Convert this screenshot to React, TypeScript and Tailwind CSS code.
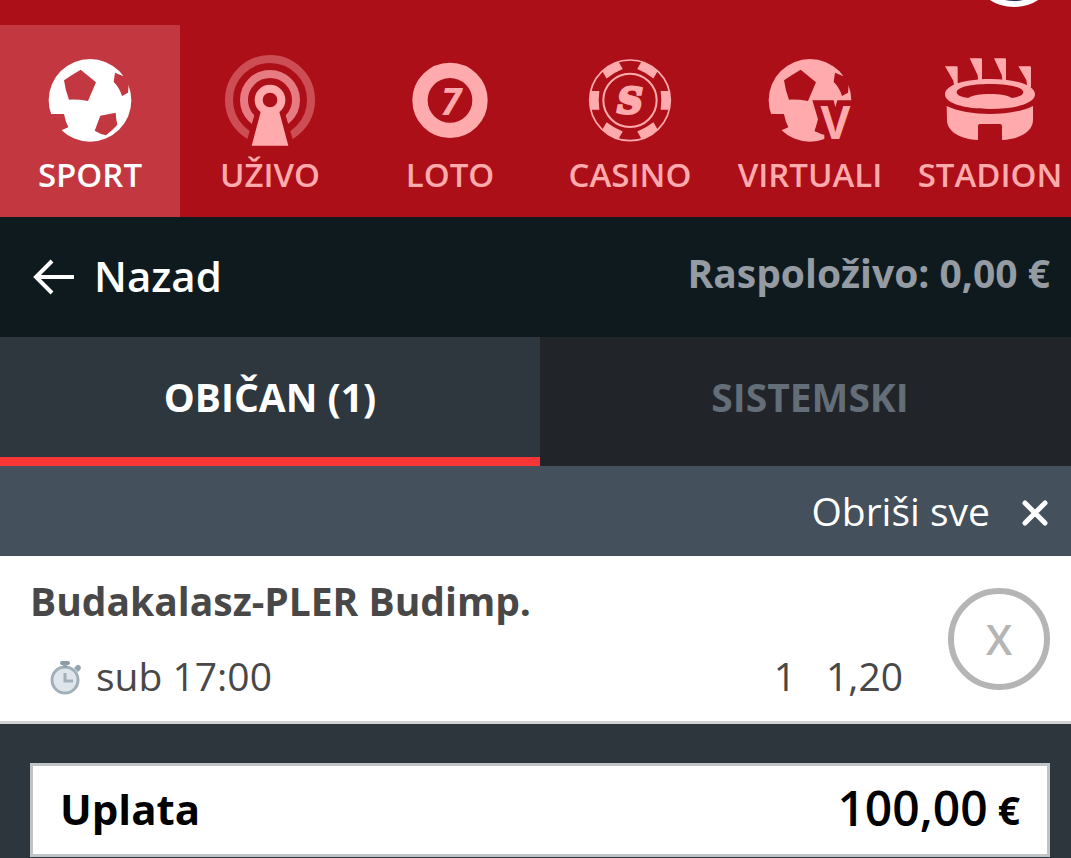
import { useState } from 'react'
import type { ReactNode } from 'react'

function IconFrame({ children }: { children: ReactNode }) {
  return (
    <svg viewBox="0 0 288 288" fill="currentColor" className="w-24 h-24 overflow-visible" aria-hidden="true">
      {children}
    </svg>
  )
}

const ballPatches = (
  <g fill="black">
    <path d="M116 53L162 91L138 147Q110 142 81 143Q70 116 66 85Q90 68 116 53Z" />
    <path d="M219 62L243 72L280 60L260 98L258 122L240 132Q232 106 215 90Z" />
    <path d="M0 186H66Q70 208 79 226L60 234L30 260Z" />
    <path d="M175 191L221 182Q222 200 226 218Q210 236 192 250Q174 246 158 236Z" />
  </g>
)

function SportIcon() {
  return (
    <IconFrame>
      <mask id="ball-mask">
        <rect width="288" height="288" fill="white" />
        {ballPatches}
      </mask>
      <circle cx="144" cy="145" r="124" mask="url(#ball-mask)" />
    </IconFrame>
  )
}

function LiveIcon() {
  return (
    <IconFrame>
      <mask id="live-mask">
        <rect width="288" height="288" fill="white" />
        <path d="M106 160L68 288H220L182 160Z" fill="black" />
      </mask>
      <g fill="none" stroke="currentColor" strokeWidth="24">
        <circle cx="144" cy="144" r="123" opacity="0.4" mask="url(#live-mask)" />
        <circle cx="144" cy="144" r="78" opacity="0.7" mask="url(#live-mask)" />
        <circle cx="144" cy="144" r="34" />
      </g>
      <path d="M117 176L89 281H199L171 176Q144 190 117 176Z" />
    </IconFrame>
  )
}

function LotoIcon() {
  return (
    <IconFrame>
      <circle cx="144" cy="145" r="90" fill="none" stroke="currentColor" strokeWidth="46" />
      <text x="147" y="188" textAnchor="middle" className="font-['Open_Sans',sans-serif] text-[112px] font-bold italic">7</text>
    </IconFrame>
  )
}

function CasinoIcon() {
  return (
    <IconFrame>
      <g fill="none" stroke="currentColor">
        <circle cx="144" cy="145" r="121" strokeWidth="5" />
        <circle cx="144" cy="145" r="80" strokeWidth="6" />
      </g>
      {[0, 60, 120, 180, 240, 300].map((angle) => (
        <path key={angle} d="M236 117H262Q268 145 262 173H236Q240 145 236 117Z" transform={`rotate(${angle} 144 145)`} />
      ))}
      <text
        x="144"
        y="184"
        textAnchor="middle"
        stroke="currentColor"
        strokeWidth="9"
        className="font-['DejaVu_Serif',serif] text-[106px] font-bold italic"
      >
        S
      </text>
    </IconFrame>
  )
}

function VirtualIcon() {
  return (
    <IconFrame>
      <mask id="virtual-mask">
        <rect width="288" height="288" fill="white" />
        {ballPatches}
        <path d="M151 145H215L220 166L226 145H288V288H187V247L158 238L168 202Z" fill="black" />
      </mask>
      <circle cx="144" cy="145" r="124" mask="url(#virtual-mask)" />
      <text x="220" y="261" textAnchor="middle" className="font-['Open_Sans',sans-serif] text-[138px] font-bold">V</text>
    </IconFrame>
  )
}

function StadiumIcon() {
  return (
    <IconFrame>
      <path d="M9 43H44Q47 43 47 47V105H37L34 86Z" />
      <path d="M83 19H117Q120 19 120 23V90H109L107 70Z" />
      <path d="M156 19H189Q192 19 192 23V90H182L179 68Z" />
      <path d="M229 43H264Q267 43 267 47V105H256L253 84Z" />
      <path
        fillRule="evenodd"
        d="M144 81C222 81 279 100 279 127S222 171 144 171S9 154 9 127S66 81 144 81ZM144 96C85 96 44 106 44 121C44 130 59 136 79 138C90 130 115 126 144 126S198 130 209 138C229 136 244 130 244 121C244 106 203 96 144 96Z"
      />
      <path d="M14 162C78 194 210 194 273 162V204C273 240 230 262 180 264V222Q180 216 174 216H114Q108 216 108 222V264C58 262 15 240 15 204Z" />
    </IconFrame>
  )
}

function StopwatchIcon() {
  return (
    <svg viewBox="0 0 32 36" className="mt-[3px] w-8 h-9" aria-hidden="true">
      <circle cx="15" cy="20" r="13" fill="#dfe6eb" stroke="#a1afb9" strokeWidth="3" />
      <rect x="10" y="1" width="10" height="4" rx="2" fill="#8b9ca6" />
      <path d="M13 4h4v4h-4zM24 8l3-3a3 3 0 0 1 3 5l-2 2z" fill="#94a4ae" />
      <path d="M15 13v8h8" fill="none" stroke="#a1afb9" strokeWidth="3" />
    </svg>
  )
}

const sections = [
  { label: 'SPORT', Icon: SportIcon },
  { label: 'UŽIVO', Icon: LiveIcon },
  { label: 'LOTO', Icon: LotoIcon },
  { label: 'CASINO', Icon: CasinoIcon },
  { label: 'VIRTUALI', Icon: VirtualIcon },
  { label: 'STADION', Icon: StadiumIcon },
]

export default function App() {
  const [stake, setStake] = useState('100,00')

  return (
    <div className="min-h-screen overflow-hidden bg-[#2c363c] font-['Open_Sans',sans-serif]">
      {/* Content runs slightly past the right edge of the viewport */}
      <div className="-mr-[9px]">
        <header className="bg-[#ad0f19]">
          <div className="flex h-[25px] items-end justify-end overflow-hidden pr-[21px] pb-[18px]">
            <div className="h-[90px] w-[90px] shrink-0 rounded-full border-[6px] border-white bg-[#2c2c54]" />
          </div>
          <nav className="grid grid-cols-6">
            {sections.map(({ label, Icon }, i) => (
              <a
                key={label}
                href="#"
                className={`flex h-48 flex-col items-center gap-[7px] pt-[27px] text-[33px] leading-10 font-semibold ${
                  i === 0 ? 'bg-[#c33740] text-white' : 'text-[#ffabad]'
                }`}
              >
                <Icon />
                <span>{label}</span>
              </a>
            ))}
          </nav>
        </header>

        {/* Back bar */}
        <div className="flex h-[120px] items-center justify-between bg-[#0f1a1f] px-[30px] pb-1">
          <button type="button" className="flex items-center gap-5 text-[42px] font-semibold text-white">
            <svg viewBox="0 0 44 40" className="mt-1 h-10 w-11" fill="none" stroke="currentColor" strokeWidth="4" aria-hidden="true">
              <path d="M22 4L6 20L22 36M6 20H44" />
            </svg>
            Nazad
          </button>
          <span className="pb-1 text-[39px] font-bold text-[#959ba2]">Raspoloživo: 0,00 €</span>
        </div>

        {/* Ticket type */}
        <div className="grid grid-cols-2 text-[39px] leading-[120px] font-bold">
          <button type="button" className="border-b-[9px] border-[#f93636] bg-[#2d373d] text-white">
            OBIČAN (1)
          </button>
          <button type="button" className="border-b-[9px] border-[#212529] bg-[#212529] text-[#636e78]">
            SISTEMSKI
          </button>
        </div>

        <div className="flex h-[90px] items-center justify-end bg-[#44505b] px-[30px]">
          <button type="button" className="flex items-center gap-[30px] text-[39px] text-white">
            Obriši sve
            <svg viewBox="0 0 30 30" className="mt-1 h-[30px] w-[30px]" fill="none" stroke="currentColor" strokeWidth="5" strokeLinecap="round" aria-hidden="true">
              <path d="M5 5L25 25M25 5L5 25" />
            </svg>
          </button>
        </div>

        {/* Selected bet */}
        <div className="flex items-center gap-[45px] border-b-[3px] border-[#d0d3d5] bg-white px-[30px] pt-[15px] pb-[15px] text-[39px] leading-[60px] text-[#484848]">
          <div className="flex flex-1 flex-col gap-[15px]">
            <h2 className="font-bold">Budakalasz-PLER Budimp.</h2>
            <div className="flex items-center">
              <div className="flex flex-1 items-center gap-[14px] pl-5">
                <StopwatchIcon />
                <span>sub 17:00</span>
              </div>
              <div className="flex gap-[30px]">
                <span>1</span>
                <span>1,20</span>
              </div>
            </div>
          </div>
          <button type="button" className="h-[102px] w-[102px] shrink-0 rounded-full border-[6px] border-[#b5b5b5] text-[42px] font-semibold text-[#b5b5b5]">
            X
          </button>
        </div>

        {/* Stake */}
        <div className="px-[30px] pt-[39px]">
          <div className="flex h-[94px] items-center border-[3px] border-[#c1c4c6] bg-white px-[27px] pb-1 text-black">
            <label htmlFor="stake" className="text-[42px] font-bold">
              Uplata
            </label>
            <input
              id="stake"
              value={stake}
              onChange={(e) => setStake(e.target.value)}
              inputMode="decimal"
              className="min-w-0 flex-1 text-right text-[48px] leading-[66px] font-semibold outline-none"
            />
            <span className="pt-1 pl-[10px] text-[39px] font-bold">€</span>
          </div>
        </div>
      </div>
    </div>
  )
}
